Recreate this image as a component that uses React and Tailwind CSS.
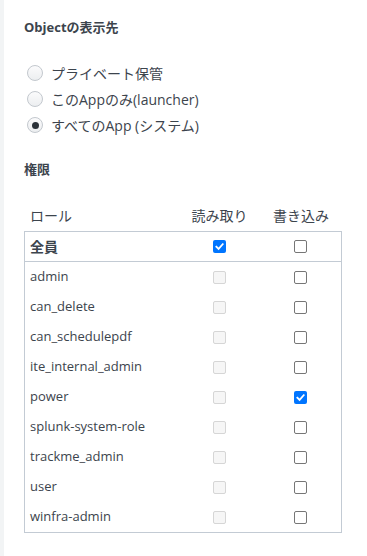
import React from "react";

const roles = [
  { name: "admin", read: false, write: false },
  { name: "can_delete", read: false, write: false },
  { name: "can_schedulepdf", read: false, write: false },
  { name: "ite_internal_admin", read: false, write: false },
  { name: "power", read: false, write: true },
  { name: "splunk-system-role", read: false, write: false },
  { name: "trackme_admin", read: false, write: false },
  { name: "user", read: false, write: false },
  { name: "winfra-admin", read: false, write: false },
];

function Check({ checked, disabled }) {
  if (checked) {
    return (
      <span className="w-[13px] h-[13px] rounded-[2px] bg-[#0075ff] flex items-center justify-center">
        <svg width="9" height="9" viewBox="0 0 10 10">
          <path d="M1.5 5.2 L4 7.6 L8.6 2.4" fill="none" stroke="white" strokeWidth="2" strokeLinecap="square" />
        </svg>
      </span>
    );
  }
  if (disabled) {
    return <span className="w-[13px] h-[13px] rounded-[2px] border border-[#d6d6d6] bg-[#f6f6f6]" />;
  }
  return <span className="w-[13px] h-[13px] rounded-[2px] border border-[#767676] bg-white" />;
}

function Radio({ checked, label }) {
  return (
    <div className="flex items-center h-[26px]">
      <span className="ml-[3px] w-[16px] h-[16px] rounded-full border border-[#c3c8ce] bg-gradient-to-b from-[#fbfbfc] to-[#eceef0] flex items-center justify-center">
        {checked && <span className="w-[7px] h-[7px] rounded-full bg-[#2b3138]" />}
      </span>
      <span className="ml-[8px] text-[14px] text-[#3c444d]">{label}</span>
    </div>
  );
}

export default function App() {
  return (
    <div
      className="flex w-[367px] h-[556px] bg-white overflow-hidden"
      style={{ fontFamily: '"Open Sans", "Noto Sans CJK JP", sans-serif' }}
    >
      <div className="w-[4px] bg-[#f2f4f5] shrink-0" />
      <div className="pl-[20px] pt-[18px] w-[342px]">
        <div className="text-[13px] font-bold text-[#3c444d] leading-[18px]">Objectの表示先</div>
        <div className="mt-[24px] flex flex-col">
          <Radio label="プライベート保管" />
          <Radio label="このAppのみ(launcher)" />
          <Radio checked label="すべてのApp (システム)" />
        </div>
        <div className="mt-[22px] text-[13px] font-bold text-[#3c444d] leading-[18px]">権限</div>
        <div className="mt-[25px] mb-[4px] grid grid-cols-[1fr_81px_81px] px-px text-[14px] text-[#3c444d] h-[24px] items-center w-[318px]">
          <span className="pl-[5px]">ロール</span>
          <span className="text-center">読み取り</span>
          <span className="text-center pl-[1px]">書き込み</span>
        </div>
        <div className="border border-[#c3cbd4] w-[318px]">
          <div className="grid grid-cols-[1fr_81px_81px] h-[30px] items-center border-b border-[#c3cbd4]">
            <span className="pl-[5px] text-[14px] font-bold text-[#3c444d]">全員</span>
            <span className="flex justify-center"><Check checked /></span>
            <span className="flex justify-center"><Check /></span>
          </div>
          {roles.map((r) => (
            <div key={r.name} className="grid grid-cols-[1fr_81px_81px] h-[30px] items-center">
              <span className="pl-[5px] text-[13px] text-[#3c444d]">{r.name}</span>
              <span className="flex justify-center"><Check disabled /></span>
              <span className="flex justify-center"><Check checked={r.write} /></span>
            </div>
          ))}
        </div>
      </div>
    </div>
  );
}
